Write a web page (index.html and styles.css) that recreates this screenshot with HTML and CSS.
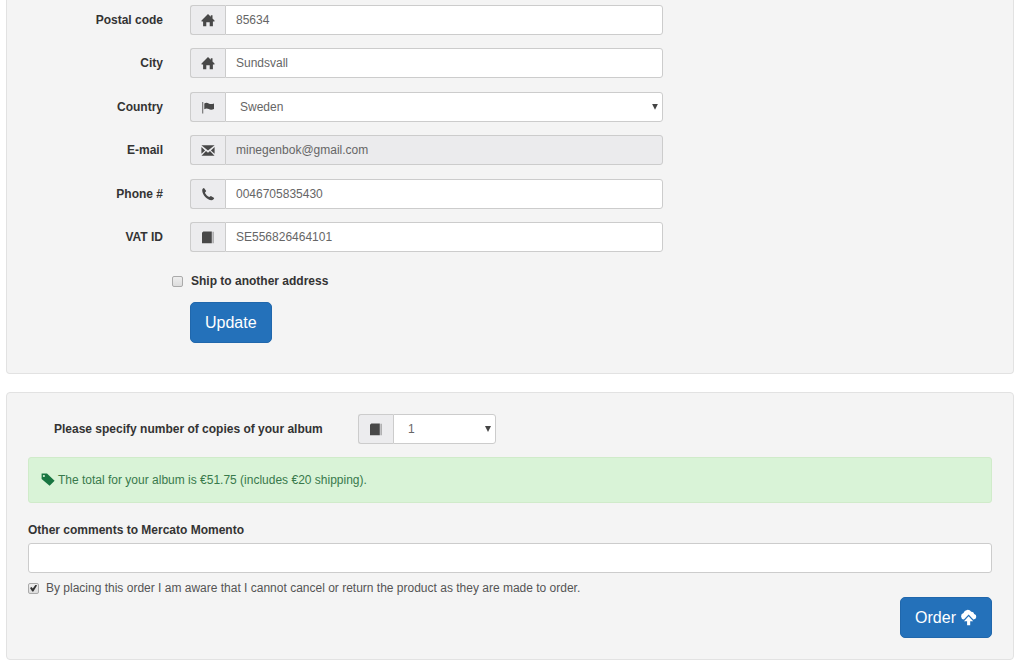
FILE: index.html
```html
<!DOCTYPE html>
<html lang="en">
<head>
<meta charset="utf-8">
<title>Order album</title>
<link rel="stylesheet" href="styles.css">
</head>
<body>
<svg class="sprite" aria-hidden="true">
  <symbol id="home" viewBox="0 0 14 14"><path d="M7 .9 9.800 3.700V2.200h1.700v3.200L13.500 7.500v.9h-1.600v4.900H8.700V9.200H5.300v4.100H2.100V8.400H.5v-.9z"/></symbol>
  <symbol id="flag" viewBox="0 0 14 14"><path d="M1 2h1.300v11.500H1z" opacity=".65"/><path d="M3.300 3.400c1.500-1 3-.9 4.400 0s2.900 1 5.300 0v5.600c-2 1-3.800 1-5.200.1s-2.900-.9-4.500.1z"/></symbol>
  <symbol id="mail" viewBox="0 0 14 14"><path d="M.4 2.200h13.200L7 7.600zM.4 4 4.100 7.400.4 10.800zM13.600 4v6.800L9.900 7.400zM5 8.100l2 1.700 2-1.700 4.500 4.700H.5z"/></symbol>
  <symbol id="phone" viewBox="0 0 14 14"><path d="M1.200 3.300C1.200 2 2 1.300 3 .9l2.200 3.200-1.300 1.600c.9 1.900 2.300 3.400 4.300 4.400l1.700-1.200 3.300 2.100c-.5 1.300-1.300 2.200-2.600 2.200C6.300 13.200 1.200 8 1.200 3.300z"/></symbol>
  <symbol id="book" viewBox="0 0 14 14"><path d="M2.300 1.500h8.500v11.700H1V2.800z"/><path d="M11.600 1.800h1v11.400h-1z" opacity=".6"/></symbol>
  <symbol id="tag" viewBox="0 0 14 14"><path fill-rule="evenodd" d="M.6 .6h5.400l7.600 7.200-5 5L.6 6zM2.900 1.900a1.100 1.100 0 1 0 0 2.200 1.100 1.100 0 0 0 0-2.200z"/></symbol>
  <symbol id="upload" viewBox="0 0 18 18"><path d="M4.100 11.200 9.100 5.900l5 5.300h.3a3 3 0 0 0 .6-5.900 3 3 0 0 0-3.100-2.400A4.600 4.600 0 0 0 3.700 4.200 3.600 3.600 0 0 0 4.100 11.200z"/><path d="M9.100 7.700 14 12.900h-3.200v4.400H7.500v-4.400H4.200z"/></symbol>
</svg>

<main class="page">
  <form class="panel panel-address">
    <div class="fields">
      <div class="field">
        <label for="postal">Postal code</label>
        <div class="group"><span class="addon"><svg class="icon"><use href="#home"/></svg></span><input class="control" id="postal" type="text" value="85634"></div>
      </div>
      <div class="field">
        <label for="city">City</label>
        <div class="group"><span class="addon"><svg class="icon"><use href="#home"/></svg></span><input class="control" id="city" type="text" value="Sundsvall"></div>
      </div>
      <div class="field">
        <label for="country">Country</label>
        <div class="group has-arrow"><span class="addon"><svg class="icon"><use href="#flag"/></svg></span><select class="control" id="country"><option>Sweden</option></select></div>
      </div>
      <div class="field">
        <label for="email">E-mail</label>
        <div class="group"><span class="addon"><svg class="icon"><use href="#mail"/></svg></span><input class="control" id="email" type="email" value="minegenbok@gmail.com" readonly></div>
      </div>
      <div class="field">
        <label for="phone-no">Phone #</label>
        <div class="group"><span class="addon"><svg class="icon"><use href="#phone"/></svg></span><input class="control" id="phone-no" type="tel" value="0046705835430"></div>
      </div>
      <div class="field">
        <label for="vat">VAT ID</label>
        <div class="group"><span class="addon"><svg class="icon"><use href="#book"/></svg></span><input class="control" id="vat" type="text" value="SE556826464101"></div>
      </div>
    </div>
    <div class="ship"><input class="check" type="checkbox" id="ship"><label for="ship">Ship to another address</label></div>
    <button class="button update" type="button">Update</button>
  </form>

  <form class="panel panel-order">
    <div class="copies">
      <label for="copies">Please specify number of copies of your album</label>
      <div class="group has-arrow"><span class="addon"><svg class="icon"><use href="#book"/></svg></span><select class="control" id="copies"><option>1</option></select></div>
    </div>
    <p class="total"><svg class="icon"><use href="#tag"/></svg><span>The total for your album is €51.75 (includes €20 shipping).</span></p>
    <label class="comments-label" for="comments">Other comments to Mercato Momento</label>
    <input class="control comments" id="comments" type="text">
    <div class="terms"><input class="check" type="checkbox" id="terms" checked><label for="terms">By placing this order I am aware that I cannot cancel or return the product as they are made to order.</label></div>
    <button class="button order" type="button">Order<svg class="icon-large"><use href="#upload"/></svg></button>
  </form>
</main>
</body>
</html>
```
FILE: styles.css
```css
* { box-sizing: border-box; }

body {
  margin: 0;
  background: #fff;
  color: #333;
  font: 12px/18px "Liberation Sans", Arial, sans-serif;
}

.sprite { display: none; }

.page {
  display: flex;
  flex-direction: column;
  gap: 18px;
  padding: 0 10px 6px 6px;
}

.panel {
  background: #f4f4f4;
  border: 1px solid #e2e2e2;
  border-radius: 4px;
  padding: 21px;
}

.panel-address {
  border-top: 0;
  border-top-left-radius: 0;
  border-top-right-radius: 0;
  padding-top: 5px;
  padding-bottom: 30px;
}

label { font-weight: bold; }

.fields {
  display: flex;
  flex-direction: column;
  justify-content: space-between;
  min-height: 247px;
}

.field {
  display: grid;
  grid-template-columns: 135px minmax(0, 473px);
  column-gap: 27px;
  align-items: center;
}

.field > label { text-align: right; }

.group {
  display: flex;
  position: relative;
  height: 30px;
}

.addon {
  display: flex;
  flex: 0 0 35px;
  align-items: center;
  justify-content: center;
  background: #ececee;
  border: 1px solid #ccc;
  border-right: 0;
  border-radius: 3px 0 0 3px;
  color: #484848;
}

.icon {
  flex: none;
  width: 14px;
  height: 14px;
  fill: currentColor;
}

.control {
  flex: 1;
  min-width: 0;
  height: 30px;
  margin: 0;
  padding: 0 10px;
  appearance: none;
  background: #fff;
  border: 1px solid #ccc;
  border-radius: 3px;
  color: #666;
  font: inherit;
}

.group .control { border-radius: 0 3px 3px 0; }

select.control { padding: 0 14px; }

.control:read-only:not(select) { background: #ebebed; }

.has-arrow::after {
  content: "";
  position: absolute;
  top: 12px;
  right: 5px;
  width: 6px;
  height: 6px;
  background: #444;
  clip-path: polygon(0 0, 100% 0, 50% 100%);
  pointer-events: none;
}

.check {
  position: relative;
  flex: none;
  width: 11px;
  height: 11px;
  margin: 0;
  appearance: none;
  background: linear-gradient(#eee, #ddd);
  border: 1px solid #aaa;
  border-radius: 2px;
}

.check:checked::before {
  content: "";
  position: absolute;
  inset: 1px;
  background: #333;
  clip-path: polygon(0 50%, 22% 36%, 40% 58%, 82% 0, 100% 14%, 48% 100%, 32% 100%);
}

.ship {
  display: flex;
  align-items: center;
  gap: 8px;
  margin: 20px 0 12px 144px;
}

.button {
  display: flex;
  align-items: center;
  gap: 4px;
  height: 41px;
  padding: 0 14px;
  background: #2471ba;
  border: 1px solid #2067ac;
  border-radius: 5px;
  color: #fff;
  font: 16px/22px "Liberation Sans", Arial, sans-serif;
}

.update { margin-left: 162px; }

.copies {
  display: grid;
  grid-template-columns: 277px 138px;
  align-items: center;
  gap: 27px;
  padding-left: 26px;
}

.total {
  display: flex;
  align-items: center;
  gap: 3px;
  min-height: 46px;
  margin: 13px 0 18px;
  padding: 0 12px;
  background: #d9f3d7;
  border: 1px solid #d0ebca;
  border-radius: 3px;
  color: #38794b;
}

.total .icon { color: #187541; }

.comments-label {
  display: block;
  margin-bottom: 4px;
}

.comments {
  display: block;
  width: 100%;
}

.terms {
  display: flex;
  align-items: center;
  gap: 7px;
  margin-top: 6px;
}

.terms label {
  color: #555;
  font-weight: normal;
}

.order { margin-left: auto; }

.icon-large {
  width: 17px;
  height: 17px;
  fill: currentColor;
}
```
